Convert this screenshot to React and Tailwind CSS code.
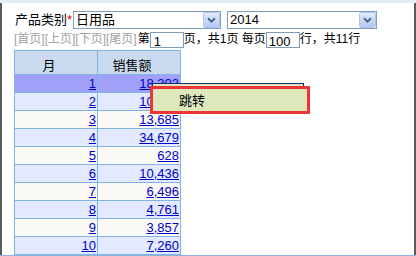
import React from 'react'

const rows = [
  ['1', '18,303'],
  ['2', '10,983'],
  ['3', '13,685'],
  ['4', '34,679'],
  ['5', '628'],
  ['6', '10,436'],
  ['7', '6,496'],
  ['8', '4,761'],
  ['9', '3,857'],
  ['10', '7,260'],
]

function Select({ value, className }) {
  return (
    <div className={`relative h-[18px] border border-[#7f9db9] bg-white flex items-center ${className}`}>
      <span className="pl-[2px] text-[13px] leading-[16px] text-black">{value}</span>
      <div className="absolute right-0 top-0 w-[17px] h-[16px] rounded-[2px] border border-[#b0c4ee] bg-gradient-to-b from-[#e2eafd] to-[#b4c8f6] flex items-center justify-center">
        <svg width="9" height="6" viewBox="0 0 9 6">
          <path d="M1 1.2 L4.5 4.6 L8 1.2" fill="none" stroke="#4d6185" strokeWidth="2" />
        </svg>
      </div>
    </div>
  )
}

export default function App() {
  return (
    <div
      className="w-[416px] h-[256px] bg-white relative overflow-hidden flex flex-col"
      style={{ fontFamily: '"Liberation Sans", "Noto Sans CJK SC", sans-serif' }}
    >
      <div className="h-[3px] bg-[#e6ecf7]" />
      <div className="flex-1 border-l-2 border-r-2 border-[#5c5c5c] pl-[12px]">
        {/* Filter row */}
        <div className="mt-[8px] flex items-center">
          <span className="ml-[1px] text-[13px] leading-[16px] text-black">
            产品类别<span className="text-[#e00000]">*</span>
          </span>
          <Select value="日用品" className="ml-[1px] w-[148px]" />
          <Select value="2014" className="ml-[6px] w-[150px]" />
        </div>

        {/* Pager row */}
        <div className="mt-[3px] h-[16px] flex items-start text-[12px] leading-[14px] text-black">
          <span className="text-[#a0a0a0]">[首页][上页][下页][尾页]</span>
          <span className="ml-[1px]">第</span>
          <div className="w-[34px] h-[16px] border border-[#7f9db9] pl-[3px] pt-[2px] text-[13px] leading-[13px]">1</div>
          <span>页，共1页 每页</span>
          <div className="w-[34px] h-[16px] border border-[#7f9db9] pl-[2px] pt-[2px] text-[13px] leading-[13px]">100</div>
          <span>行，共11行</span>
        </div>

        {/* Table */}
        <div className="mt-[2px] w-[167px] border-l border-t border-[#80b3e6]">
          <div className="flex bg-[#c9daef]">
            <div className="w-[83px] h-[24px] border-r border-b border-[#80b3e6] pt-[7px] pr-[14px] text-center text-[13px] leading-[15px]">月</div>
            <div className="w-[83px] h-[24px] border-r border-b border-[#80b3e6] pt-[7px] pr-[14px] text-center text-[13px] leading-[15px]">销售额</div>
          </div>
          {rows.map(([m, v], i) => (
            <div
              key={m}
              className={`flex ${i === 0 ? 'bg-[#a0a0f8]' : i % 2 === 1 ? 'bg-[#e3eaff]' : 'bg-[#fbfaf6]'}`}
            >
              <div className="w-[83px] h-[18px] border-r border-b border-[#80b3e6] pr-[1px] pt-[1px] text-right text-[13px] leading-[16px]">
                <a className="text-[#0000cc] underline">{m}</a>
              </div>
              <div className="w-[83px] h-[18px] border-r border-b border-[#80b3e6] pr-[1px] pt-[1px] text-right text-[13px] leading-[16px]">
                <a className="text-[#0000cc] underline">{v}</a>
              </div>
            </div>
          ))}
        </div>
      </div>
      <div className="h-[1px] bg-[#8cb4dc]" />

      {/* Context menu */}
      <div className="absolute left-[152px] top-[83px] w-[152px] h-[28px] border border-[#1a2a6e] bg-[#dce9bd]" />
      <div className="absolute left-[150px] top-[86px] w-[160px] h-[28px] border-[3px] border-[#ee3535] bg-[#dce9bd] pl-[26px] flex items-center text-[13px] leading-[15px] text-black">
        跳转
      </div>
    </div>
  )
}
